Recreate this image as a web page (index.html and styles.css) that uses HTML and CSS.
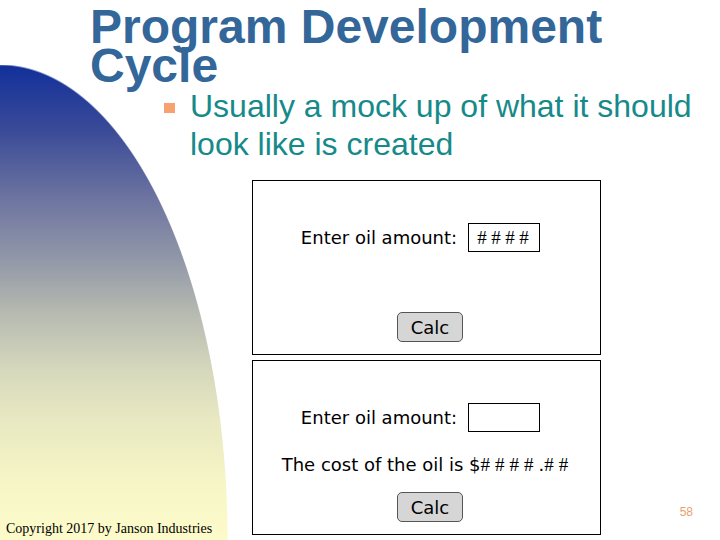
FILE: index.html
```html
<!DOCTYPE html>
<html>
<head>
<meta charset="utf-8">
<link rel="stylesheet" href="styles.css">
</head>
<body>
<div class="slide">
  <h1 class="title">Program Development<br>Cycle</h1>
  <div class="bullet">
    <span class="mark"></span>
    <p class="bullet-text">Usually a mock up of what it should<br>look like is created</p>
  </div>
  <div class="stage">
    <div class="copyright">Copyright 2017 by Janson Industries</div>
    <div class="mocks">
      <div class="mock">
        <div class="field-row">
          <span class="label">Enter oil amount:</span>
          <span class="input"><span class="hash">####</span></span>
        </div>
        <div class="btn btn-first">Calc</div>
      </div>
      <div class="mock">
        <div class="field-row">
          <span class="label">Enter oil amount:</span>
          <span class="input"></span>
        </div>
        <div class="cost">The cost of the oil is $<span class="hash">####</span>.<span class="hash">##</span></div>
        <div class="btn btn-second">Calc</div>
      </div>
    </div>
    <div class="pagenum">58</div>
  </div>
</div>
</body>
</html>
```

FILE: styles.css
```css
html, body {
  margin: 0;
  padding: 0;
  background: #fff;
}

.slide {
  width: 720px;
  height: 540px;
  box-sizing: border-box;
  padding-top: 7px;
  display: flex;
  flex-direction: column;
  overflow: hidden;
  background:
    radial-gradient(228px 476px at 0 540px, rgba(255,255,255,0) 99.6%, #fff 100%),
    linear-gradient(to bottom,
      #fff 0,
      #fff 65px,
      #12309a 65px,
      #3a4a98 130px,
      #6e75a0 200px,
      #9298a8 260px,
      #b4b8b0 310px,
      #d6d8bc 370px,
      #e8e8c2 420px,
      #f6f5c6 480px,
      #fdfbca 540px);
}

.title {
  margin: 0 0 0 90px;
  font-family: "Liberation Sans", Arial, sans-serif;
  font-weight: bold;
  font-size: 48px;
  line-height: 39px;
  color: #336699;
}

.bullet {
  display: flex;
  align-items: flex-start;
  margin: 2px 0 0 164px;
}

.mark {
  width: 11px;
  height: 10px;
  margin-top: 16px;
  margin-right: 15px;
  background: #f7a070;
  flex: none;
}

.bullet-text {
  margin: 0;
  font-family: "Liberation Sans", Arial, sans-serif;
  font-size: 32px;
  line-height: 38px;
  color: #168a8a;
}

.stage {
  flex: 1;
  margin-top: 17px;
  display: grid;
  grid-template-columns: 252px 349px 1fr;
}

.copyright {
  align-self: end;
  padding-left: 6px;
  margin-bottom: 4px;
  font-family: "Liberation Serif", "Times New Roman", serif;
  font-size: 14px;
  line-height: 15px;
  color: #000;
  white-space: nowrap;
  position: relative;
  z-index: 1;
}

.mocks {
  display: flex;
  flex-direction: column;
  gap: 5px;
}

.mock {
  height: 175px;
  box-sizing: border-box;
  border: 1px solid #000;
  background: #fff;
  display: flex;
  flex-direction: column;
  align-items: center;
  padding-top: 42px;
  font-family: "DejaVu Sans", Verdana, sans-serif;
  font-size: 18px;
  color: #000;
}

.field-row {
  display: flex;
  align-items: center;
  gap: 11px;
  margin-right: 12px;
}

.label {
  line-height: 22px;
}

.input {
  width: 72px;
  height: 29px;
  box-sizing: border-box;
  border: 1px solid #000;
  background: #fff;
  display: flex;
  align-items: center;
  padding-left: 8px;
}

.hash {
  font-family: "Liberation Serif", "Times New Roman", serif;
  font-size: 19px;
  letter-spacing: 4.5px;
}

.cost {
  margin-top: 22px;
  margin-left: 2px;
  line-height: 22px;
  white-space: nowrap;
}

.cost .hash {
  letter-spacing: 5px;
}

.btn {
  width: 66px;
  height: 30px;
  box-sizing: border-box;
  border: 1px solid #555;
  border-radius: 5px;
  background: #d6d6d6;
  display: flex;
  align-items: center;
  justify-content: center;
  font-size: 18px;
  margin-left: 7px;
}

.btn-first {
  margin-top: 60px;
}

.btn-second {
  margin-top: 16px;
}

.pagenum {
  align-self: end;
  justify-self: end;
  padding-right: 27px;
  margin-bottom: 21px;
  font-family: "Liberation Sans", Arial, sans-serif;
  font-size: 12px;
  line-height: 14px;
  color: #e8a070;
}
```
